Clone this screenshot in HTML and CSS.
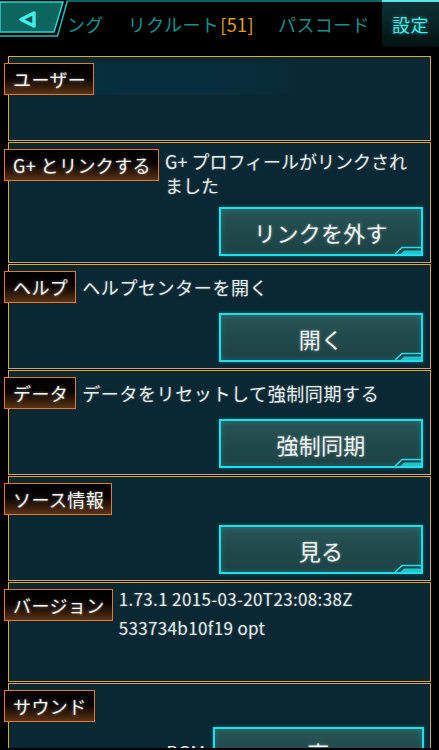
FILE: index.html
```html
<!DOCTYPE html>
<html lang="ja">
<head>
    <meta charset="UTF-8">
    <meta name="viewport" content="width=device-width, initial-scale=1.0">
    <title>設定</title>
    <link rel="stylesheet" href="styles.css">
</head>
<body>

<div class="screen">

    <!-- Top tab bar -->
    <div class="topbar">
        <a href="#" class="back-button">
            <svg width="68" height="38" viewBox="0 0 68 38">
                <polygon points="0,2 63,2 54,32 0,32" fill="#0c665f" stroke="#27d6d0" stroke-width="1.5"/>
                <polyline points="67.5,0.5 57.5,36 0,36" fill="none" stroke="#1cbcbc" stroke-width="1.5"/>
                <polygon points="21,19.5 34,13 34,26" fill="#0b524d" stroke="#3ff0ec" stroke-width="3.5" stroke-linejoin="round"/>
            </svg>
        </a>
        <div class="tabs">
            <span class="tab">ランキング</span>
            <span class="tab">リクルート<span class="tab-count">[51]</span></span>
            <span class="tab">パスコード</span>
        </div>
        <span class="tab tab-active">設定</span>
    </div>

    <div class="settings">

        <section class="section section-user">
            <div class="section-head">
                <span class="label">ユーザー</span>
                <span class="user-name"></span>
            </div>
        </section>

        <section class="section">
            <div class="section-head">
                <span class="label">G+ とリンクする</span>
                <p class="desc desc-multi">G+ プロフィールがリンクされ<br>ました</p>
            </div>
            <div class="actions">
                <button class="btn">リンクを外す<svg class="btn-corner" width="26" height="8" viewBox="0 0 26 8"><polyline points="0,8 7,1.5 26,1.5" fill="none" stroke="#1fe0ea" stroke-width="1.5"/><polygon points="9,4.5 26,4.5 26,8 5.5,8" fill="#1fc4d0"/></svg></button>
            </div>
        </section>

        <section class="section">
            <div class="section-head">
                <span class="label">ヘルプ</span>
                <p class="desc">ヘルプセンターを開く</p>
            </div>
            <div class="actions">
                <button class="btn">開く<svg class="btn-corner" width="26" height="8" viewBox="0 0 26 8"><polyline points="0,8 7,1.5 26,1.5" fill="none" stroke="#1fe0ea" stroke-width="1.5"/><polygon points="9,4.5 26,4.5 26,8 5.5,8" fill="#1fc4d0"/></svg></button>
            </div>
        </section>

        <section class="section">
            <div class="section-head">
                <span class="label">データ</span>
                <p class="desc">データをリセットして強制同期する</p>
            </div>
            <div class="actions">
                <button class="btn">強制同期<svg class="btn-corner" width="26" height="8" viewBox="0 0 26 8"><polyline points="0,8 7,1.5 26,1.5" fill="none" stroke="#1fe0ea" stroke-width="1.5"/><polygon points="9,4.5 26,4.5 26,8 5.5,8" fill="#1fc4d0"/></svg></button>
            </div>
        </section>

        <section class="section">
            <div class="section-head">
                <span class="label">ソース情報</span>
            </div>
            <div class="actions">
                <button class="btn">見る<svg class="btn-corner" width="26" height="8" viewBox="0 0 26 8"><polyline points="0,8 7,1.5 26,1.5" fill="none" stroke="#1fe0ea" stroke-width="1.5"/><polygon points="9,4.5 26,4.5 26,8 5.5,8" fill="#1fc4d0"/></svg></button>
            </div>
        </section>

        <section class="section section-version">
            <div class="section-head">
                <span class="label">バージョン</span>
                <p class="desc desc-version">1.73.1 2015-03-20T23:08:38Z<br>533734b10f19 opt</p>
            </div>
        </section>

        <section class="section">
            <div class="section-head">
                <span class="label">サウンド</span>
            </div>
            <div class="actions actions-sound">
                <span class="option-name">BGM</span>
                <button class="btn btn-wide">高</button>
            </div>
        </section>

    </div>
</div>

</body>
</html>
```

FILE: styles.css
```css
* {
    box-sizing: border-box;
}

html,
body {
    margin: 0;
    padding: 0;
    background-color: #000;
}

body {
    font-family: "Noto Sans CJK JP", "Noto Sans", sans-serif;
    color: #eef2f2;
}

.screen {
    width: 439px;
    height: 748px;
    overflow: hidden;
}

/* Top tab bar */
.topbar {
    display: flex;
    align-items: flex-start;
    height: 47px;
}

.back-button {
    display: block;
    flex: none;
    width: 68px;
    height: 38px;
}

.back-button svg {
    display: block;
}

.tabs {
    flex: 1;
    min-width: 0;
    height: 47px;
    display: flex;
    justify-content: flex-end;
    overflow: hidden;
    border-top: 2px solid #0b6464;
}

.tab {
    flex: none;
    padding: 0 12px;
    font-size: 18px;
    line-height: 45px;
    letter-spacing: 0.4px;
    color: #14938d;
    white-space: nowrap;
}

.tab-count {
    color: #e3a01c;
    margin-left: 1px;
}

.tab-active {
    width: 57px;
    height: 47px;
    padding: 0 0 0 10px;
    color: #46e8e8;
    border-top: 2px solid #5ee6e6;
    background: linear-gradient(180deg, #0e3133 0%, #072022 60%, #03100f 100%);
    text-shadow: 0 0 4px rgba(70, 232, 232, 0.5);
}

/* Settings list */
.settings {
    padding: 9px 8px 0;
}

.section {
    margin-bottom: 1px;
    padding: 6px 7px 6px 0;
    border: 1px solid #d9a93a;
    background-color: #0a2833;
}

.section-user {
    min-height: 85px;
}

.section-version {
    min-height: 100px;
}

.section-head {
    display: flex;
    align-items: flex-start;
    gap: 6px;
}

.label {
    flex: none;
    height: 32px;
    margin-left: -5px;
    padding: 0 7px 0 8px;
    border: 1px solid #e4782c;
    background: linear-gradient(180deg, #000 0%, #080402 45%, #3a200c 80%, #5c3414 100%);
    font-size: 18px;
    line-height: 30px;
    letter-spacing: 0.4px;
    color: #fafafa;
    text-shadow: 0 0 3px rgba(255, 255, 255, 0.45);
    white-space: nowrap;
}

.user-name {
    width: 212px;
    height: 32px;
    margin-left: -6px;
    background: linear-gradient(90deg, rgba(6, 52, 72, 0.55) 0%, rgba(6, 50, 68, 0.45) 75%, rgba(6, 50, 68, 0) 100%);
}

.desc {
    margin: 0;
    font-size: 18px;
    line-height: 32px;
    letter-spacing: 0.6px;
    color: #e8eeee;
    white-space: nowrap;
    text-shadow: 0 0 2px rgba(255, 255, 255, 0.3);
}

.desc-multi {
    line-height: 24px;
    letter-spacing: 0;
}

.desc-version {
    margin-top: -5px;
    font-size: 17px;
    line-height: 29px;
    letter-spacing: 0.35px;
}

/* Buttons */
.actions {
    display: flex;
    justify-content: flex-end;
    margin-top: 10px;
}

.actions-sound {
    align-items: center;
    gap: 8px;
    margin-top: 5px;
}

.option-name {
    font-size: 18px;
    color: #e8eeee;
}

.btn {
    position: relative;
    width: 204px;
    height: 49px;
    padding: 0;
    border: 2px solid #1fe0ea;
    background: linear-gradient(180deg, #2a5455 0%, #214a4c 45%, #1d4245 100%);
    box-shadow: inset 0 0 6px rgba(31, 224, 234, 0.25), 0 0 3px rgba(31, 224, 234, 0.4);
    font-family: inherit;
    font-size: 22px;
    letter-spacing: 0.3px;
    color: #f2f4f4;
    text-shadow: 0 0 3px rgba(255, 255, 255, 0.4);
    cursor: pointer;
}

.btn-wide {
    width: 211px;
    margin-right: -1px;
}

/* Notch in the lower right corner of each button */
.btn-corner {
    position: absolute;
    right: 0;
    bottom: 0;
    display: block;
}
```
